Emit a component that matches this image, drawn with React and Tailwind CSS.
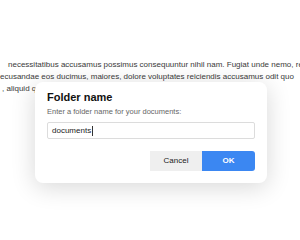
import React from 'react';

const lines = [
  { pad: 'pl-[8px]', text: 'necessitatibus accusamus possimus consequuntur nihil nam. Fugiat unde nemo, recusandae' },
  { pad: 'pl-0', text: 'ecusandae eos ducimus, maiores, dolore voluptates reiciendis accusamus odit quo' },
  { pad: 'pl-[2px]', text: ', aliquid quas, minima tempore voluptatem dolorum quidem eius' },
];

export default function App() {
  return (
    <div className="relative w-[300px] h-[240px] overflow-hidden bg-white font-['Liberation_Sans',Arial,sans-serif]">
      {/* page text behind the dialog */}
      <div className="pt-[59px] text-[8px] leading-[12px] text-[#3a3a3a]">
        {lines.map((l, i) => (
          <div key={i} className={`whitespace-nowrap ${l.pad}`}>{l.text}</div>
        ))}
      </div>

      {/* dialog */}
      <div className="absolute left-[35px] top-[82px] w-[232px] rounded-[8px] bg-white px-[12px] pt-[8px] pb-[12px] shadow-[0_4px_24px_rgba(0,0,0,0.16)]">
        <div className="text-[11px] leading-[14px] font-bold text-[#111]">Folder name</div>
        <div className="mt-[3px] text-[7.5px] leading-[10px] text-[#666]">Enter a folder name for your documents:</div>
        <div className="mt-[5px] flex h-[17px] items-center rounded-[2px] border border-[#dcdcdc] px-[4px] text-[8px] text-[#222]">
          documents<span className="ml-[1px] inline-block h-[10px] w-px bg-[#333]" />
        </div>
        <div className="mt-[12px] flex justify-end">
          <button className="h-[20px] w-[52px] bg-[#efefef] text-[8px] text-[#222]">Cancel</button>
          <button className="h-[20px] w-[53px] rounded-r-[3px] bg-[#3b87f2] text-[8px] font-bold text-white">OK</button>
        </div>
      </div>
    </div>
  );
}
